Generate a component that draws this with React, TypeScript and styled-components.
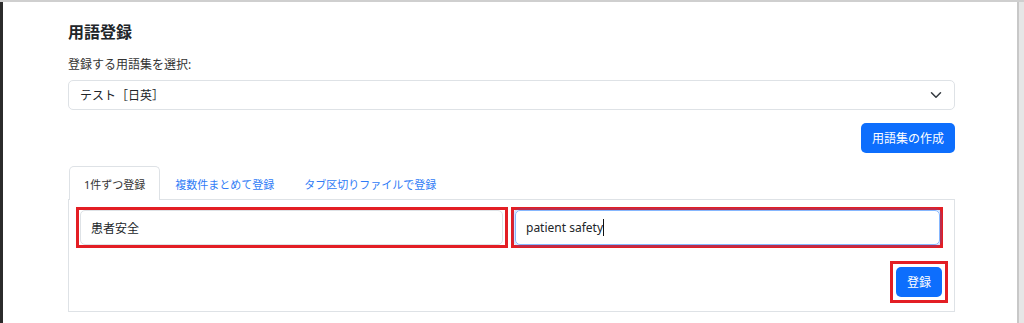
import * as React from "react";
import styled, { createGlobalStyle } from "styled-components";

const GlobalStyle = createGlobalStyle`
  html, body {
    margin: 0;
    padding: 0;
    background: #fff;
  }
  body {
    font-family: "Segoe UI", "Noto Sans", "Noto Sans CJK JP", sans-serif;
    color: #212529;
  }
`;

const Frame = styled.div`
  display: flex;
  height: 323px;
  overflow: hidden;
  border-top: 2px solid #cfcfcf;
  box-sizing: border-box;
`;

const LeftEdge = styled.div`
  width: 3px;
  background: #2b2b2b;
`;

const RightEdge = styled.div`
  width: 5px;
  border-left: 2px solid #c8c8c8;
  background: #e6e6e6;
`;

const Main = styled.main`
  flex: 1;
  padding: 18px 0 0 65px;
`;

const Content = styled.div`
  width: 887px;
  display: flex;
  flex-direction: column;
`;

const Title = styled.h2`
  margin: 0;
  font-size: 16px;
  font-weight: 700;
  line-height: 24px;
  height: 24px;
`;

const Label = styled.label`
  margin-top: 12px;
  font-size: 12px;
  line-height: 18px;
  color: #333;
`;

const Select = styled.div`
  margin-top: 6px;
  height: 30px;
  box-sizing: border-box;
  border: 1px solid #dee2e6;
  border-radius: 5px;
  display: flex;
  align-items: center;
  justify-content: space-between;
  padding: 0 12px 0 11px;
  font-size: 12px;
  color: #212529;
`;

const ButtonRow = styled.div`
  display: flex;
  justify-content: flex-end;
  margin-top: 13px;
`;

const PrimaryButton = styled.button`
  height: 30px;
  padding: 0 11px;
  border: none;
  border-radius: 5px;
  background: #0d6efd;
  color: #fff;
  font-family: inherit;
  font-size: 12px;
`;

const Tabs = styled.div`
  display: flex;
  margin-top: 13px;
  border-bottom: 1px solid #dee2e6;
  height: 33px;
`;

const Tab = styled.div<{ $active?: boolean }>`
  padding: 0 14px;
  margin-left: ${(p) => (p.$active ? "1px" : "0")};
  display: flex;
  align-items: center;
  font-size: 11px;
  color: ${(p) => (p.$active ? "#333" : "#2f7cf6")};
  background: ${(p) => (p.$active ? "#fff" : "transparent")};
  border: 1px solid ${(p) => (p.$active ? "#dee2e6" : "transparent")};
  border-bottom: none;
  border-radius: 5px 5px 0 0;
  margin-bottom: -1px;
  height: 34px;
  box-sizing: border-box;
`;

const Panel = styled.div`
  border: 1px solid #dee2e6;
  border-top: none;
  height: 112px;
  box-sizing: border-box;
  padding: 7px 11px 0 7px;
  display: flex;
  flex-direction: column;
`;

const Fields = styled.div`
  display: grid;
  grid-template-columns: 432px 432px;
  column-gap: 3px;
`;

/* red annotation box drawn round a control */
const Marked = styled.div<{ $pad: string }>`
  border: 3px solid #e31e24;
  padding: ${(p) => p.$pad};
  display: flex;
`;

const Field = styled.div<{ $focused?: boolean }>`
  flex: 1;
  height: 35px;
  box-sizing: border-box;
  border: 1px solid ${(p) => (p.$focused ? "#86b7fe" : "#dee2e6")};
  box-shadow: ${(p) => (p.$focused ? "0 0 0 2px rgba(13,110,253,0.18)" : "none")};
  border-radius: 5px;
  display: flex;
  align-items: center;
  padding: 0 10px;
  font-size: 12px;
  color: #212529;
`;

const Caret = styled.span`
  display: inline-block;
  width: 1px;
  height: 17px;
  background: #111;
`;

const SubmitRow = styled.div`
  display: flex;
  justify-content: flex-end;
  margin-top: 13px;
  margin-right: -5px;
`;

export default function App() {
  return (
    <>
      <GlobalStyle />
      <Frame>
        <LeftEdge />
        <Main>
          <Content>
            <Title>用語登録</Title>
            <Label>登録する用語集を選択:</Label>
            <Select>
              <span>テスト［日英］</span>
              <svg width="12" height="12" viewBox="0 0 16 16" fill="none">
                <path d="M2 5l6 6 6-6" stroke="#343a40" strokeWidth="2" strokeLinecap="round" strokeLinejoin="round" />
              </svg>
            </Select>
            <ButtonRow>
              <PrimaryButton>用語集の作成</PrimaryButton>
            </ButtonRow>
            <Tabs>
              <Tab $active>1件ずつ登録</Tab>
              <Tab>複数件まとめて登録</Tab>
              <Tab>タブ区切りファイルで登録</Tab>
            </Tabs>
            <Panel>
              <Fields>
                <Marked $pad="0 2px 0 1px">
                  <Field>患者安全</Field>
                </Marked>
                <Marked $pad="0 0 0 1px">
                  <Field $focused>
                    patient safety
                    <Caret />
                  </Field>
                </Marked>
              </Fields>
              <SubmitRow>
                <Marked $pad="3px 3px">
                  <PrimaryButton>登録</PrimaryButton>
                </Marked>
              </SubmitRow>
            </Panel>
          </Content>
        </Main>
        <RightEdge />
      </Frame>
    </>
  );
}
